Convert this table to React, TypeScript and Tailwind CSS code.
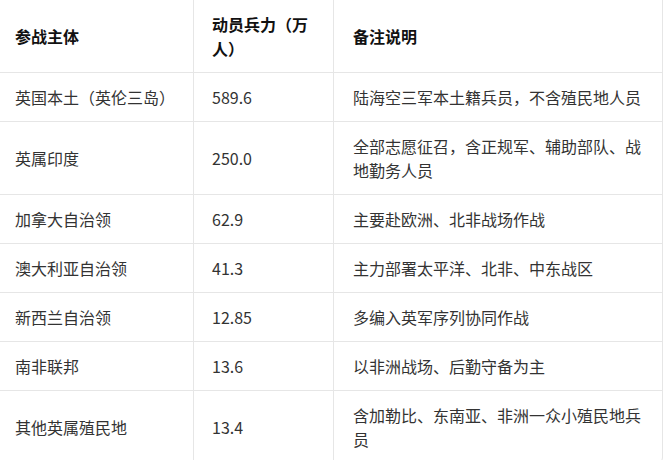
import React from 'react';

interface Row {
  name: string;
  troops: string;
  note: string;
}

const rows: Row[] = [
  { name: '英国本土（英伦三岛）', troops: '589.6', note: '陆海空三军本土籍兵员，不含殖民地人员' },
  { name: '英属印度', troops: '250.0', note: '全部志愿征召，含正规军、辅助部队、战地勤务人员' },
  { name: '加拿大自治领', troops: '62.9', note: '主要赴欧洲、北非战场作战' },
  { name: '澳大利亚自治领', troops: '41.3', note: '主力部署太平洋、北非、中东战区' },
  { name: '新西兰自治领', troops: '12.85', note: '多编入英军序列协同作战' },
  { name: '南非联邦', troops: '13.6', note: '以非洲战场、后勤守备为主' },
  { name: '其他英属殖民地', troops: '13.4', note: '含加勒比、东南亚、非洲一众小殖民地兵员' },
];

export default function App() {
  return (
    <div
      className="w-[665px] h-[460px] overflow-hidden bg-white"
      style={{ fontFamily: '"Noto Sans CJK SC", "Noto Sans", sans-serif' }}
    >
      <div className="ml-[-5px] w-[668px] border-x border-b border-[#e6e6e6] rounded-b-lg overflow-hidden">
        <table className="w-full table-fixed border-separate border-spacing-0 text-[16px] leading-6">
          <colgroup>
            <col className="w-[198px]" />
            <col className="w-[140px]" />
            <col />
          </colgroup>
          <thead>
            <tr className="text-left text-[#111]">
              <th className="border-r border-b border-[#e6e6e6] pl-[19px] pr-[18px] py-3 font-bold align-middle">参战主体</th>
              <th className="border-r border-b border-[#e6e6e6] pl-[18px] pr-[18px] py-3 font-bold align-middle">动员兵力（万人）</th>
              <th className="border-b border-[#e6e6e6] pl-[19px] pr-[18px] py-3 font-bold align-middle">备注说明</th>
            </tr>
          </thead>
          <tbody className="text-[#333]">
            {rows.map((r) => (
              <tr key={r.name}>
                <td className="border-r border-b border-[#e6e6e6] pl-[19px] pr-[18px] py-3 align-middle">{r.name}</td>
                <td className="border-r border-b border-[#e6e6e6] pl-[18px] pr-[18px] py-3 align-middle">{r.troops}</td>
                <td className="border-b border-[#e6e6e6] pl-[19px] pr-[18px] py-3 align-middle">{r.note}</td>
              </tr>
            ))}
          </tbody>
        </table>
      </div>
    </div>
  );
}
